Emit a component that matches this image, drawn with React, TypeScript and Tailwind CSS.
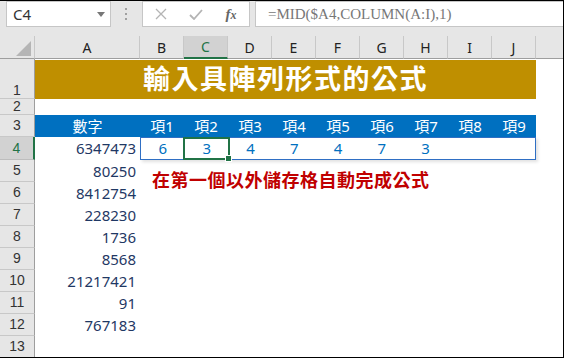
import React from "react";

const cols = ["A", "B", "C", "D", "E", "F", "G", "H", "I", "J"];
const nums = ["6347473", "80250", "8412754", "228230", "1736", "8568", "21217421", "91", "767183"];
const items = ["項1", "項2", "項3", "項4", "項5", "項6", "項7", "項8", "項9"];
const vals = ["6", "3", "4", "7", "4", "7", "3", "", ""];

const font = { fontFamily: '"Noto Sans", "Noto Sans CJK TC", sans-serif' };
const headFont = { fontFamily: '"Liberation Sans", sans-serif' };

function RowHead({ n, selected, bottom }: { n: number; selected?: boolean; bottom?: boolean }) {
  return (
    <div
      style={headFont}
      className={
        "flex justify-center border-b border-r text-[14px] leading-[15px] " +
        (bottom ? "items-end " : "items-center ") +
        (selected
          ? "bg-[#d2d2d2] text-[#217346] border-b-[#bdbdbd] border-r-2 border-r-[#217346]"
          : "bg-[#e6e6e6] text-[#333] border-b-[#c8c8c8] border-r-[#9e9e9e]")
      }
    >
      {n}
    </div>
  );
}

function FormulaBar() {
  return (
    <div className="flex h-[35px] items-start bg-[#e6e6e6]">
      <div className="ml-[6px] flex h-[26px] w-[105px] items-center justify-between border border-[#c6c6c6] bg-white pl-[6px] pr-[5px]">
        <span className="text-[15px] text-[#333]">C4</span>
        <svg width="8" height="5" viewBox="0 0 8 5">
          <path d="M0 0h8L4 5z" fill="#777" />
        </svg>
      </div>
      <div className="flex h-[26px] w-[31px] items-center justify-center">
        <svg width="3" height="12" viewBox="0 0 3 12">
          <rect x="0" y="0" width="2" height="2" fill="#a0a0a0" />
          <rect x="0" y="5" width="2" height="2" fill="#a0a0a0" />
          <rect x="0" y="10" width="2" height="2" fill="#a0a0a0" />
        </svg>
      </div>
      <div className="flex h-[26px] w-[108px] items-center border border-[#c6c6c6] bg-white">
        <div className="flex w-[36px] justify-center">
          <svg width="12" height="12" viewBox="0 0 12 12">
            <path d="M1 1l10 10M11 1L1 11" stroke="#b4b4b4" strokeWidth="1.3" />
          </svg>
        </div>
        <div className="flex w-[34px] justify-center">
          <svg width="14" height="11" viewBox="0 0 14 11">
            <path d="M1 6l4 4 8-9" stroke="#b4b4b4" strokeWidth="1.8" fill="none" />
          </svg>
        </div>
        <div className="flex w-[36px] justify-center">
          <span
            className="text-[15px] font-bold italic text-[#666]"
            style={{ fontFamily: '"Liberation Serif", serif' }}
          >
            f<span className="text-[12px]">x</span>
          </span>
        </div>
      </div>
      <div className="ml-[5px] flex h-[26px] flex-1 items-center border-y border-l border-[#c6c6c6] bg-white pl-[12px]">
        <span className="text-[15px] text-[#777]" style={{ fontFamily: '"Liberation Serif", serif' }}>
          =MID($A4,COLUMN(A:I),1)
        </span>
      </div>
    </div>
  );
}

export default function App() {
  return (
    <div
      className="box-border h-[358px] w-[564px] overflow-hidden border-y border-r border-black bg-white"
      style={font}
    >
      <FormulaBar />
      <div className="grid grid-cols-[35px_105px_repeat(9,44px)_1fr] grid-rows-[23px_40px_16px_22px_23px_repeat(9,22px)]">
        {/* column headers */}
        <div className="flex items-end justify-end border-b border-r border-b-[#9e9e9e] border-r-[#c8c8c8] bg-[#e6e6e6] pb-[2px] pr-[3px]">
          <svg width="15" height="15" viewBox="0 0 15 15">
            <path d="M15 0V15H0z" fill="#b5b5b5" />
          </svg>
        </div>
        {cols.map((c) =>
          c === "C" ? (
            <div
              key={c}
              className="flex items-center justify-center border-b-2 border-r border-b-[#217346] border-r-[#c8c8c8] bg-[#d2d2d2] text-[14px] text-[#217346]"
            >
              {c}
            </div>
          ) : (
            <div
              key={c}
              className="flex items-center justify-center border-b border-r border-b-[#9e9e9e] border-r-[#c8c8c8] bg-[#e6e6e6] text-[14px] text-[#222]"
            >
              {c}
            </div>
          )
        )}
        <div className="border-b border-b-[#9e9e9e] bg-[#e6e6e6]" />

        {/* row 1 */}
        <RowHead n={1} bottom />
        <div className="col-span-10 mt-px flex items-center justify-center bg-[#bf8f00] text-[27px] font-bold tracking-[1.5px] text-white">
          輸入具陣列形式的公式
        </div>
        <div />

        {/* row 2 */}
        <RowHead n={2} />
        <div className="col-span-11" />

        {/* row 3 */}
        <RowHead n={3} />
        <div className="flex items-center justify-center bg-[#0070c0] text-[15px] text-white">數字</div>
        {items.map((t) => (
          <div key={t} className="flex items-center justify-center bg-[#0070c0] text-[15px] text-white">
            {t}
          </div>
        ))}
        <div />

        {/* row 4 */}
        <RowHead n={4} selected />
        <div className="flex items-center justify-end pr-[4px] text-[15px] text-[#1f3864]">{nums[0]}</div>
        <div className="relative col-span-9 flex border border-[#2f6fc4] shadow-[2px_2px_3px_rgba(0,0,0,0.12)]">
          {vals.map((v, i) => (
            <div key={i} className="flex flex-1 items-center justify-center text-[15px] text-[#0070c0]">
              {v}
            </div>
          ))}
          <div className="absolute -top-px left-[42px] h-[23px] w-[47px] border-2 border-[#217346]">
            <div className="absolute -bottom-[4px] -right-[4px] h-[7px] w-[7px] border border-white bg-[#217346]" />
          </div>
        </div>
        <div />

        {/* row 5 */}
        <RowHead n={5} />
        <div className="flex items-center justify-end pr-[4px] text-[15px] text-[#1f3864]">{nums[1]}</div>
        <div className="col-span-10 pl-[12px] pt-[9px]">
          <span className="whitespace-nowrap text-[18px] font-bold leading-[22px] tracking-[0.5px] text-[#c00000]">
            在第一個以外儲存格自動完成公式
          </span>
        </div>

        {/* rows 6-12 */}
        {nums.slice(2).map((n, i) => (
          <React.Fragment key={n}>
            <RowHead n={i + 6} />
            <div className="flex items-center justify-end pr-[4px] text-[15px] text-[#1f3864]">{n}</div>
            <div className="col-span-10" />
          </React.Fragment>
        ))}

        {/* row 13 */}
        <RowHead n={13} />
        <div className="col-span-11" />
      </div>
    </div>
  );
}
